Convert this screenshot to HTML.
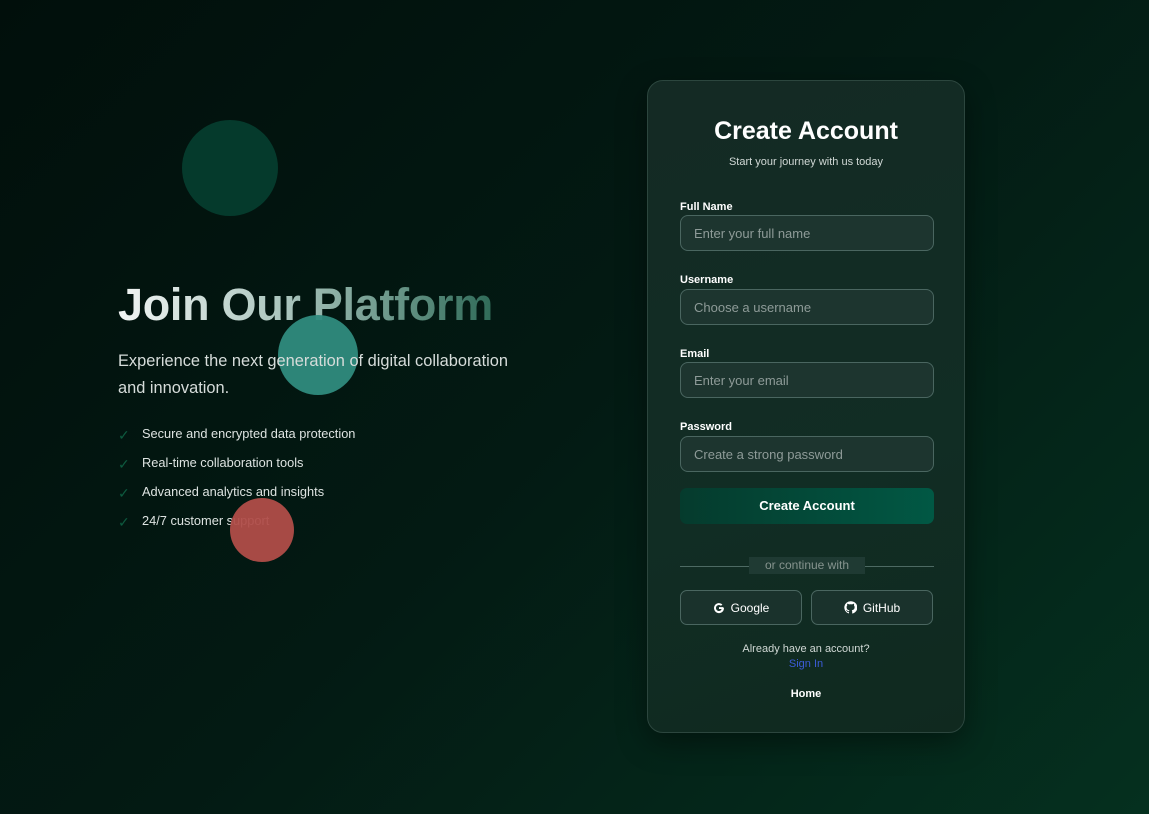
<!DOCTYPE html>
<html><head><style>
*{margin:0;padding:0;box-sizing:border-box}
body{width:1149px;height:814px;overflow:hidden;font-family:"Liberation Sans",sans-serif;background:linear-gradient(135deg,#010f0b 0%,#031a13 50%,#05301f 100%);position:relative;color:#fff}
.c{position:absolute;border-radius:50%}
h1{position:absolute;left:118px;top:279px;font-size:45px;font-weight:bold;background:linear-gradient(90deg,#f2f5f4 0%,#a9c4bc 45%,#2f6b58 100%);-webkit-background-clip:text;color:transparent;white-space:nowrap;letter-spacing:-0.3px}
.sub{position:absolute;left:118px;top:348px;font-size:16.4px;line-height:27px;color:#d6dcda;width:420px}
ul{position:absolute;left:118px;top:426px;list-style:none}
li{font-size:12.8px;color:#dde3e1;height:29px;position:relative;padding-left:24px}
li:before{content:"✓";position:absolute;left:0;top:1px;color:#0d5a3f;font-size:14px}
.card{position:absolute;left:647px;top:80px;width:318px;height:653px;border-radius:16px;border:1px solid #2c463e;background:linear-gradient(160deg,#142a24,#112d24 60%,#10291f);box-shadow:0 10px 30px rgba(0,0,0,.4)}
.t{position:absolute;left:0;width:100%;text-align:center}
.lbl{position:absolute;left:32px;font-size:11px;font-weight:bold;color:#fff}
.in{position:absolute;left:32px;width:254px;height:36px;border:1px solid #4a6660;border-radius:8px;background:#1d352f;font-size:13px;color:#8e9b98;padding:10px 13px}
.btn{position:absolute;left:32px;top:407px;width:254px;height:36px;border-radius:7px;background:linear-gradient(90deg,#053b2d,#015844);font-size:13px;font-weight:bold;text-align:center;line-height:36px}
.soc{position:absolute;top:509px;width:122px;height:35px;border:1px solid #4a6660;border-radius:7px;background:#1a322c;font-size:12px;display:flex;align-items:center;justify-content:center;gap:6px}
</style></head><body>
<div class="c" style="left:182px;top:120px;width:96px;height:96px;background:#053a2c"></div>
<h1>Join Our Platform</h1>
<div class="c" style="left:278px;top:315px;width:80px;height:80px;background:#2f8b7e;opacity:.95"></div>
<div class="sub">Experience the next generation of digital collaboration and innovation.</div>
<ul><li>Secure and encrypted data protection</li><li>Real-time collaboration tools</li><li>Advanced analytics and insights</li><li>24/7 customer support</li></ul>
<div class="c" style="left:230px;top:498px;width:64px;height:64px;background:#b04d49;opacity:.95"></div>
<div class="card">
<div class="t" style="top:36px;font-size:25px;font-weight:bold">Create Account</div>
<div class="t" style="top:75px;font-size:11px;color:#d0d8d5">Start your journey with us today</div>
<div class="lbl" style="top:120px">Full Name</div><div class="in" style="top:134px">Enter your full name</div>
<div class="lbl" style="top:193px">Username</div><div class="in" style="top:208px">Choose a username</div>
<div class="lbl" style="top:267px">Email</div><div class="in" style="top:281px">Enter your email</div>
<div class="lbl" style="top:340px">Password</div><div class="in" style="top:355px">Create a strong password</div>
<div class="btn">Create Account</div>
<div style="position:absolute;left:32px;top:485px;width:254px;height:1px;background:#4d6a63"></div>
<div style="position:absolute;left:101px;top:476px;width:116px;height:17px;background:#1f3a33;font-size:12px;color:#86948f;text-align:center;line-height:17px">or continue with</div>
<div class="soc" style="left:32px"><svg width="12" height="12" viewBox="0 0 24 24"><path d="M21 12.2c0-.7-.1-1.3-.2-2H12v3.9h5.1a4.4 4.4 0 0 1-1.9 2.9A6 6 0 1 1 16 7.6l2.8-2.7A10 10 0 1 0 22 12z" fill="#fff"/></svg>Google</div>
<div class="soc" style="left:163px"><svg width="13" height="13" viewBox="0 0 24 24"><path fill="#fff" d="M12 .5a11.5 11.5 0 0 0-3.6 22.4c.6.1.8-.3.8-.6v-2c-3.2.7-3.9-1.5-3.9-1.5-.5-1.3-1.3-1.7-1.3-1.7-1-.7.1-.7.1-.7 1.2.1 1.8 1.2 1.8 1.2 1 1.8 2.8 1.3 3.5 1 .1-.8.4-1.3.7-1.6-2.6-.3-5.3-1.3-5.3-5.7 0-1.3.5-2.3 1.2-3.1-.1-.3-.5-1.5.1-3.1 0 0 1-.3 3.2 1.2a11 11 0 0 1 5.8 0c2.2-1.5 3.2-1.2 3.2-1.2.6 1.6.2 2.8.1 3.1.8.8 1.2 1.9 1.2 3.1 0 4.4-2.7 5.4-5.3 5.7.4.4.8 1.1.8 2.2v3.3c0 .3.2.7.8.6A11.5 11.5 0 0 0 12 .5z"/></svg>GitHub</div>
<div class="t" style="top:562px;font-size:11px;color:#d0d8d5">Already have an account?</div>
<div class="t" style="top:577px;font-size:11px;color:#3b5bd6">Sign In</div>
<div class="t" style="top:607px;font-size:11px;font-weight:bold">Home</div>
</div>
</body></html>
